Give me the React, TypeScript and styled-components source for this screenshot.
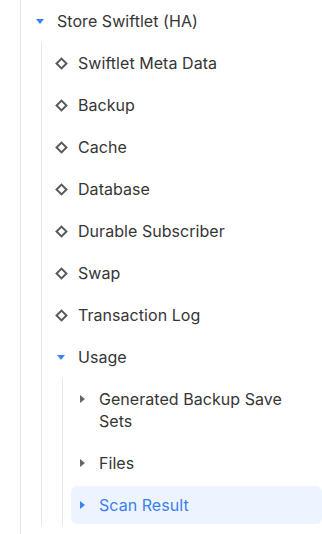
import React from "react";
import styled, { createGlobalStyle } from "styled-components";

const Global = createGlobalStyle`
  html, body { margin: 0; padding: 0; background: #ffffff; }
  body { font-family: Inter, "Noto Sans", sans-serif; }
`;

type Node = {
  label: string;
  kind: "open" | "closed" | "leaf";
  selected?: boolean;
  children?: Node[];
};

const tree: Node = {
  label: "Store Swiftlet (HA)",
  kind: "open",
  children: [
    { label: "Swiftlet Meta Data", kind: "leaf" },
    { label: "Backup", kind: "leaf" },
    { label: "Cache", kind: "leaf" },
    { label: "Database", kind: "leaf" },
    { label: "Durable Subscriber", kind: "leaf" },
    { label: "Swap", kind: "leaf" },
    { label: "Transaction Log", kind: "leaf" },
    {
      label: "Usage",
      kind: "open",
      children: [
        { label: "Generated Backup Save Sets", kind: "closed" },
        { label: "Files", kind: "closed" },
        { label: "Scan Result", kind: "closed", selected: true },
      ],
    },
  ],
};

const Panel = styled.div`
  width: 322px;
  height: 534px;
  overflow: hidden;
  box-sizing: border-box;
  padding-left: 20px;
`;

const Group = styled.div<{ $root?: boolean }>`
  display: flex;
  flex-direction: column;
  border-left: 1px solid #e6e6e6;
  padding-left: 8px;
  margin-left: ${(p) => (p.$root ? "0" : "12px")};
  min-height: ${(p) => (p.$root ? "534px" : "auto")};
  box-sizing: border-box;
`;

const Row = styled.div<{ $selected?: boolean }>`
  display: flex;
  align-items: flex-start;
  margin: 2px 0;
  padding: 8px 8px 8px 3px;
  border-radius: 6px;
  background: ${(p) => (p.$selected ? "#edf4ff" : "transparent")};
  color: ${(p) => (p.$selected ? "#3b7ff0" : "#363636")};
  font-size: 16px;
  line-height: 22px;
  letter-spacing: 0.05px;
`;

const IconBox = styled.span`
  flex: 0 0 16px;
  width: 16px;
  height: 22px;
  display: flex;
  align-items: center;
  justify-content: center;
  margin-right: 9px;
`;

const CaretDown = styled.span`
  width: 0;
  height: 0;
  border-left: 4px solid transparent;
  border-right: 4px solid transparent;
  border-top: 5px solid #3b82f6;
  margin-top: 1px;
`;

const CaretRight = styled.span<{ $active?: boolean }>`
  width: 0;
  height: 0;
  border-top: 4px solid transparent;
  border-bottom: 4px solid transparent;
  border-left: 5px solid ${(p) => (p.$active ? "#3b82f6" : "#666666")};
`;

const Diamond = styled.span`
  width: 5px;
  height: 5px;
  border: 2px solid #5a5a5a;
  transform: rotate(45deg);
  box-sizing: content-box;
`;

const Label = styled.span`
  flex: 1;
  min-width: 0;
`;

function TreeNode({ node }: { node: Node }) {
  return (
    <>
      <Row $selected={node.selected}>
        <IconBox>
          {node.kind === "open" && <CaretDown />}
          {node.kind === "closed" && <CaretRight $active={node.selected} />}
          {node.kind === "leaf" && <Diamond />}
        </IconBox>
        <Label>{node.label}</Label>
      </Row>
      {node.kind === "open" && node.children && (
        <Group>
          {node.children.map((c) => (
            <TreeNode key={c.label} node={c} />
          ))}
        </Group>
      )}
    </>
  );
}

export default function App() {
  return (
    <>
      <Global />
      <Panel>
        <Group $root>
          <TreeNode node={tree} />
        </Group>
      </Panel>
    </>
  );
}
